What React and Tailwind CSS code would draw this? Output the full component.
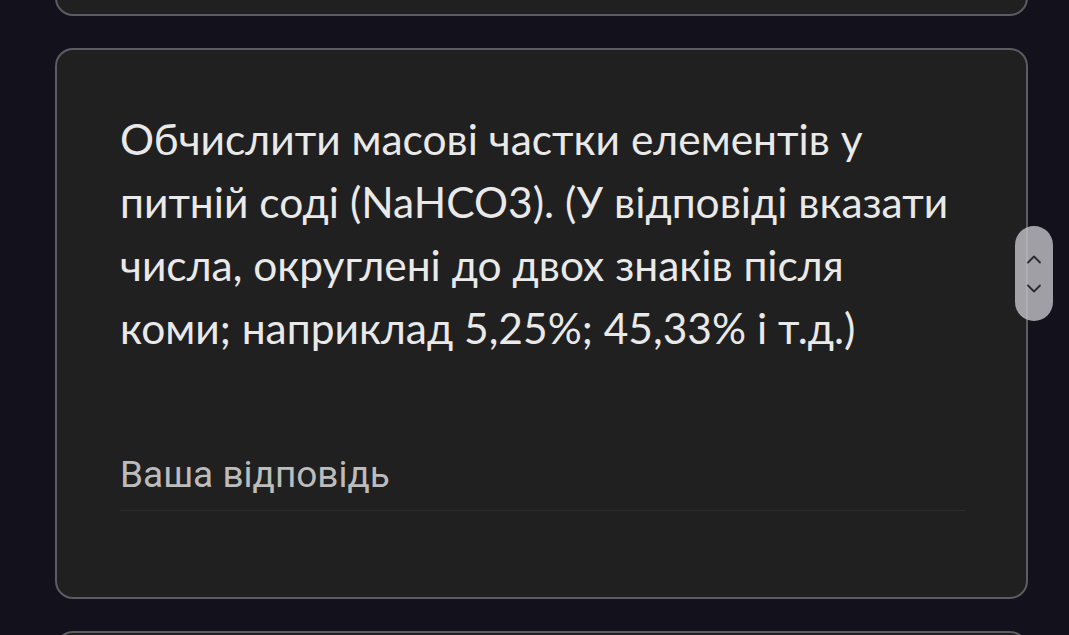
export default function App() {
  return (
    <div className="w-[1069px] h-[635px] overflow-hidden bg-[#13111c] relative">
      <div className="flex flex-col gap-[32px] pl-[55px] pr-[41px] mt-[-40px]">
        <div className="h-[56px] rounded-[18px] border-2 border-[#5d5c62] bg-[#202020]" />
        <div className="h-[551px] rounded-[18px] border-2 border-[#5d5c62] bg-[#202020] pl-[63px] pr-[61px] pt-[57px]">
          <p className="text-[42.5px] leading-[63px] text-[#e9e9e9] font-[Lato,sans-serif]">
            Обчислити масові частки елементів у питній соді (NaHCO3). (У відповіді вказати числа, округлені до двох знаків після коми; наприклад 5,25%; 45,33% і т.д.)
          </p>
          <div className="mt-[94px] border-b border-[#2c2c2c] pb-[7px] leading-[44px]">
            <span className="text-[37px] leading-[44px] text-[#bcbcbc] font-[Roboto,sans-serif]">Ваша відповідь</span>
          </div>
        </div>
        <div className="h-[56px] rounded-[18px] border-2 border-[#5d5c62] bg-[#202020]" />
      </div>
      <div className="absolute left-[1015px] top-[226px] w-[38px] h-[95px] rounded-full bg-[#c4c3c9]/80 flex flex-col items-center justify-center gap-[20px]">
        <svg width="16" height="9" viewBox="0 0 16 9" fill="none" stroke="#2a2a2e" strokeWidth="1.8" strokeLinecap="round" strokeLinejoin="round"><path d="M2 7.5 L8 1.5 L14 7.5" /></svg>
        <svg width="16" height="9" viewBox="0 0 16 9" fill="none" stroke="#2a2a2e" strokeWidth="1.8" strokeLinecap="round" strokeLinejoin="round"><path d="M2 1.5 L8 7.5 L14 1.5" /></svg>
      </div>
    </div>
  );
}
